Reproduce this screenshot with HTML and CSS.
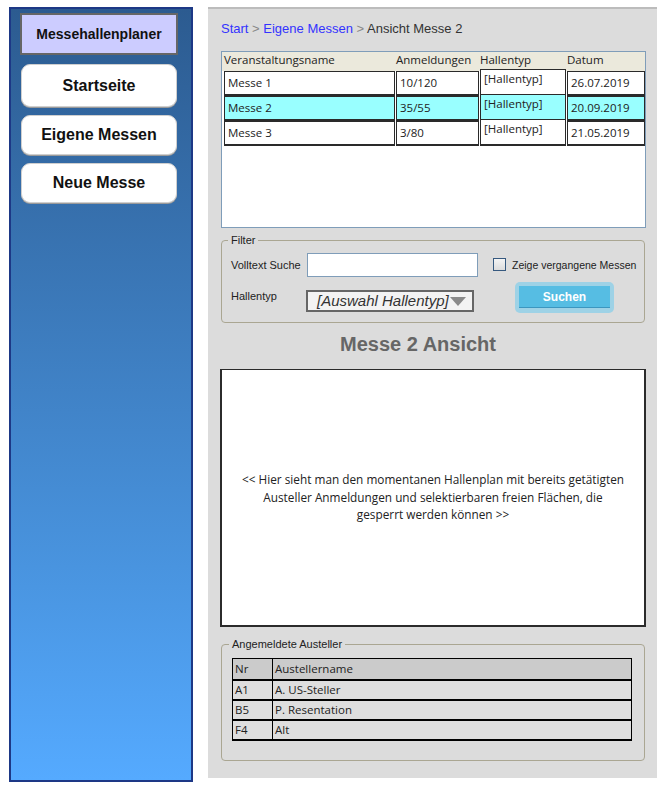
FILE: index.html
```html
<!DOCTYPE html>
<html lang="de">
<head>
<meta charset="utf-8">
<title>Messehallenplaner</title>
<link rel="stylesheet" href="styles.css">
</head>
<body>
<div class="app">
  <nav class="sidebar">
    <div class="brand">Messehallenplaner</div>
    <a class="nav-btn nav-first">Startseite</a>
    <a class="nav-btn">Eigene Messen</a>
    <a class="nav-btn">Neue Messe</a>
  </nav>
  <main class="main">
    <div class="crumbs"><a class="crumb-link">Start</a><span class="sep"> &gt; </span><a class="crumb-link">Eigene Messen</a><span class="sep"> &gt; </span><span class="crumb-cur">Ansicht Messe 2</span></div>

    <div class="grid-box">
      <div class="grid-head">
        <span>Veranstaltungsname</span><span>Anmeldungen</span><span>Hallentyp</span><span>Datum</span>
      </div>
      <div class="grid-row">
        <span class="cell">Messe 1</span><span class="cell">10/120</span><span class="cell cell-up">[Hallentyp]</span><span class="cell">26.07.2019</span>
      </div>
      <div class="grid-row sel">
        <span class="cell">Messe 2</span><span class="cell">35/55</span><span class="cell cell-up">[Hallentyp]</span><span class="cell">20.09.2019</span>
      </div>
      <div class="grid-row">
        <span class="cell">Messe 3</span><span class="cell">3/80</span><span class="cell cell-up">[Hallentyp]</span><span class="cell">21.05.2019</span>
      </div>
    </div>

    <fieldset class="group filter">
      <legend>Filter</legend>
      <div class="frow frow1">
        <span class="flabel">Volltext Suche</span>
        <span class="textbox"></span>
        <span class="check"></span>
        <span class="check-label">Zeige vergangene Messen</span>
      </div>
      <div class="frow frow2">
        <span class="flabel flabel2">Hallentyp</span>
        <span class="select"><span class="select-text">[Auswahl Hallentyp]</span><span class="tri"></span></span>
        <span class="btn-glow"><span class="btn">Suchen</span></span>
      </div>
    </fieldset>

    <h1 class="title">Messe 2 Ansicht</h1>

    <div class="plan">
      <p>&lt;&lt; Hier sieht man den momentanen Hallenplan mit bereits getätigten<br>Austeller Anmeldungen und selektierbaren freien Flächen, die<br>gesperrt werden können &gt;&gt;</p>
    </div>

    <fieldset class="group exhib">
      <legend>Angemeldete Austeller</legend>
      <table class="ex-table">
        <tr class="ex-head"><td class="c1">Nr</td><td>Austellername</td></tr>
        <tr><td class="c1">A1</td><td>A. US-Steller</td></tr>
        <tr><td class="c1">B5</td><td>P. Resentation</td></tr>
        <tr><td class="c1">F4</td><td>Alt</td></tr>
      </table>
    </fieldset>
  </main>
</div>
</body>
</html>
```

FILE: styles.css
```css
* { box-sizing: border-box; }
html, body { margin: 0; padding: 0; background: #fff; }
body { width: 669px; height: 800px; overflow: hidden; font-family: "Liberation Sans", Arial, sans-serif; }

.app { display: flex; align-items: flex-start; padding: 7px 0 0 9px; }

/* Sidebar */
.sidebar {
  width: 184px; height: 775px; flex-shrink: 0;
  border: 2px solid #1d3886;
  background: linear-gradient(to bottom, #2c5b90 0%, #4a96e2 75%, #55aaff 100%);
  padding: 4px 0 0 9px;
  display: flex; flex-direction: column;
}
.brand {
  width: 158px; height: 42px;
  background: #ccccff; border: 2px solid #666;
  display: flex; align-items: center; justify-content: center;
  font-weight: bold; font-size: 14px; color: #111;
}
.nav-btn {
  width: 156px; height: 40px; margin: 8px 0 0 1px;
  background: #fff; border: 1px solid #cfcfcf; border-radius: 9px;
  box-shadow: 0 1px 0 #9a9a9a;
  display: flex; align-items: center; justify-content: center;
  font-weight: bold; font-size: 16px; color: #111;
}
.nav-first { height: 43px; margin-top: 9px; }

/* Main */
.main {
  width: 449px; height: 771px; margin-left: 15px; flex-shrink: 0;
  background: #dcdcdc; border-top: 2px solid #bcbcbc;
  padding: 12px 11px 0 13px;
  display: flex; flex-direction: column;
}
.crumbs { font-size: 13px; line-height: 16px; color: #333; }
.crumb-link { color: #3333ff; }
.sep { color: #888; }
.crumb-cur { color: #333; }

/* data grid */
.grid-box {
  margin-top: 14px; width: 425px; height: 177px;
  background: #fff; border: 1px solid #7f9db9;
  font-family: "Open Sans", "DejaVu Sans", sans-serif; font-size: 11.5px; color: #222;
}
.grid-head {
  display: grid; grid-template-columns: 172px 84px 87px 79px;
  height: 19px; background: #ebe9dc; padding-left: 2px; line-height: 16px;
}
.grid-row {
  display: grid; grid-template-columns: 172px 84px 87px 79px;
  padding-left: 2px; height: 25px;
}
.cell {
  border: 1px solid #2a2a2a; border-bottom-width: 2px;
  padding: 0 3px; line-height: 22px; background: #fff;
  margin-right: 1px;
}
.cell-up { line-height: 18px; margin-top: -2px; }
.sel .cell { background: #99ffff; }

/* groups */
.group {
  margin: 0; padding: 0 9px; border: 1px solid #aaa692; border-radius: 4px;
  width: 424px; min-width: 0;
}
.group legend {
  font-size: 11px; line-height: 13px; color: #222; padding: 0 3px; margin-left: -3px;
}
.filter { margin-top: 6px; padding-top: 6px; padding-bottom: 9px; }
.frow { display: flex; align-items: center; font-size: 11px; color: #222; white-space: nowrap; }
.frow > * { flex-shrink: 0; }
.frow1 { height: 24px; }
.frow2 { height: 31px; margin-top: 5px; }
.flabel { width: 76px; }
.flabel2 { width: 75px; margin-top: -4px; }
.textbox { width: 171px; height: 24px; background: #fff; border: 1px solid #7f9db9; }
.check {
  width: 13px; height: 13px; margin-left: 15px; margin-top: -1px;
  border: 1px solid #36597f; background: linear-gradient(#f4f4f4, #dcdcdc);
}
.check-label { margin-left: 6px; font-size: 10.5px; }
.select {
  width: 168px; height: 22px; margin-top: 6px;
  border: 2px solid #666; background: #f3f3f3;
  display: flex; align-items: center; padding-left: 9px;
}
.select-text { font-style: italic; font-size: 15px; color: #333; white-space: nowrap; }
.tri {
  width: 0; height: 0; margin-left: 1px; margin-top: 2px;
  border-left: 8px solid transparent; border-right: 8px solid transparent; border-top: 9px solid #8a8a8a;
}
.btn-glow {
  width: 99px; height: 31px; margin-left: 41px;
  background: #9ed2e6; border-radius: 5px; padding: 4px;
}
.btn {
  display: flex; align-items: center; justify-content: center;
  height: 22px; background: #56bde3; border-bottom: 1px solid #3c96bf;
  color: #fff; font-weight: bold; font-size: 12px;
}

.title {
  margin: 9px 0 0 0; padding-left: 119px;
  font-size: 20px; line-height: 24px; font-weight: bold; color: #666;
}

.plan {
  margin: 13px 0 0 -1px; width: 426px; height: 258px;
  background: #fff; border: 2px solid #2b2b2b; border-top-width: 1px;
  display: flex; align-items: center; justify-content: center;
}
.plan p {
  margin: 0; text-align: center;
  font-family: "Open Sans", "DejaVu Sans", sans-serif; font-size: 11.8px; line-height: 17.5px; color: #222;
}

.exhib { margin-top: 11px; padding-top: 7px; padding-bottom: 19px; }
.exhib legend { margin-left: -2px; }
.ex-table {
  width: 400px; margin-left: 1px; border-collapse: collapse;
  font-family: "Open Sans", "DejaVu Sans", sans-serif; font-size: 11.5px; color: #222;
}
.ex-table td {
  border: 1px solid #000; border-bottom-width: 2px; height: 20px; padding: 0 0 0 2px;
  line-height: 17px; background: #dedede;
}
.ex-table .c1 { width: 40px; }
.ex-head td { background: #cbcbcb; height: 21px; }
```
